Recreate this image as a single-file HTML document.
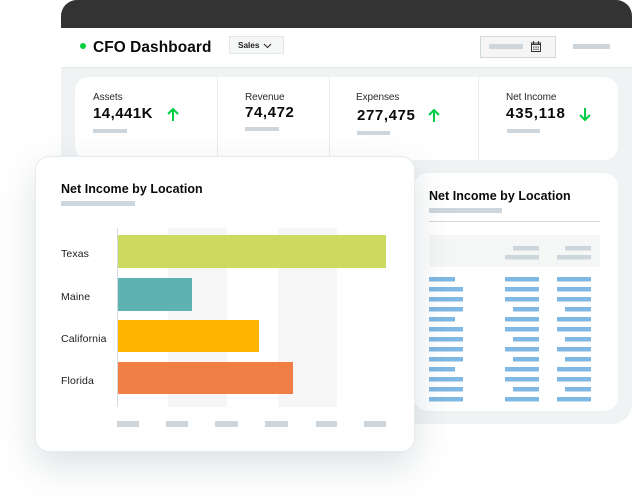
<!DOCTYPE html>
<html><head><meta charset="utf-8">
<style>
html,body{margin:0;padding:0;background:#fff}
#p{position:relative;width:632px;height:503px;overflow:hidden;background:#fff;font-family:"Liberation Sans",sans-serif;color:#111}
#p div{position:absolute}
.t{white-space:nowrap;line-height:1}
.l{font-size:10px;color:#2a2a2a;letter-spacing:-.08px}
.v{font-size:15px;font-weight:700;color:#0a0a0a;letter-spacing:.6px}
.g{background:#cdd6dc}
.h{font-size:12.5px;font-weight:700;color:#0a0a0a;letter-spacing:.03px}
.c{font-size:10.5px;color:#1c1c1c;letter-spacing:.12px}
svg{position:absolute;overflow:visible}
</style></head><body>
<div id="p">
<div style="left:61px;top:0;width:571px;height:424px;background:#f0f3f4;border-radius:16px 16px 20px 0"></div>
<div style="left:61px;top:0;width:571px;height:28px;background:#333;border-radius:16px 16px 0 0"></div>
<div style="left:61px;top:28px;width:571px;height:39px;background:#fff;border-bottom:1px solid #e4e9eb"></div>
<div style="left:80px;top:43px;width:6px;height:6px;border-radius:50%;background:#00cf3f"></div>
<div class="t" style="left:93px;top:40px;font-size:15.4px;font-weight:700;color:#0a0a0a;letter-spacing:.1px">CFO Dashboard</div>
<div style="left:229px;top:36px;width:53px;height:16px;background:#f5f6f6;border:1px solid #e1e6e8"></div>
<div class="t" style="left:238px;top:40.5px;font-size:8.3px;font-weight:700;color:#222;letter-spacing:-.05px">Sales</div>
<svg style="left:263px;top:43px" width="9" height="6" viewBox="0 0 9 6"><path d="M1 1l3.5 3.5L8 1" fill="none" stroke="#222" stroke-width="1"/></svg>
<div style="left:480px;top:36px;width:74px;height:20px;background:#f5f5f5;border:1px solid #cfd9de"></div>
<div class="g" style="left:489px;top:44px;width:34px;height:5px"></div>
<svg style="left:531px;top:41px" width="10" height="11" viewBox="0 0 10 11"><path d="M.5 2h9v8.500h-9zM2.500 0v3M7.500 0v3" fill="none" stroke="#333" stroke-width="1"/><path d="M1 3h8v1H1zM2 5.500h1.500v1H2zM4.300 5.500h1.500v1H4.300zM6.500 5.500H8v1H6.500zM2 7.800h1.500v1H2zM4.300 7.800h1.500v1H4.300zM6.500 7.800H8v1H6.500z" fill="#333"/></svg>
<div class="g" style="left:573px;top:44px;width:37px;height:5px"></div>

<div style="left:75px;top:77px;width:543px;height:83px;background:#fff;border-radius:14px"></div>
<div style="left:217px;top:77px;width:1px;height:83px;background:#e8ecee"></div>
<div style="left:329px;top:77px;width:1px;height:83px;background:#e8ecee"></div>
<div style="left:478px;top:77px;width:1px;height:83px;background:#e8ecee"></div>

<div class="t l" style="left:93px;top:92.500px">Assets</div>
<div class="t v" style="left:93px;top:106px;letter-spacing:.45px">14,441K</div>
<div class="g" style="left:93px;top:129px;width:34px;height:4px"></div>
<svg style="left:166px;top:107px" width="14" height="15" viewBox="0 0 14 15"><path d="M7 14V2M2 7l5-5 5 5" fill="none" stroke="#00cf45" stroke-width="2"/></svg>

<div class="t l" style="left:245px;top:92.500px">Revenue</div>
<div class="t v" style="left:245px;top:105px">74,472</div>
<div class="g" style="left:245px;top:127px;width:34px;height:4px"></div>

<div class="t l" style="left:356px;top:92.500px">Expenses</div>
<div class="t v" style="left:357px;top:108px">277,475</div>
<div class="g" style="left:357px;top:131px;width:33px;height:4px"></div>
<svg style="left:427px;top:108px" width="14" height="15" viewBox="0 0 14 15"><path d="M7 14V2M2 7l5-5 5 5" fill="none" stroke="#00cf45" stroke-width="2"/></svg>

<div class="t l" style="left:506px;top:92.500px">Net Income</div>
<div class="t v" style="left:506px;top:106px;letter-spacing:.9px">435,118</div>
<div class="g" style="left:507px;top:129px;width:33px;height:4px"></div>
<svg style="left:578px;top:107px" width="14" height="15" viewBox="0 0 14 15"><path d="M7 1v12M2 8l5 5 5-5" fill="none" stroke="#00cf45" stroke-width="2"/></svg>

<div style="left:414px;top:173px;width:204px;height:238px;background:#fff;border-radius:14px"></div>
<div class="t h" style="left:429px;top:189.500px">Net Income by Location</div>
<div class="g" style="left:429px;top:208px;width:73px;height:5px"></div>
<div style="left:429px;top:221px;width:171px;height:1px;background:#d2d6d8"></div>
<div style="left:429px;top:235px;width:171px;height:32px;background:#f5f6f6"></div>
<svg style="left:0;top:0" width="632" height="503" viewBox="0 0 632 503">
<g fill="#cdd6dc"><rect x="513" y="246" width="26" height="4.500"/><rect x="505" y="255" width="34" height="4.500"/><rect x="565" y="246" width="26" height="4.500"/><rect x="557" y="255" width="34" height="4.500"/></g>
<g fill="#7fb8e2">
<rect x="429" y="277" width="26" height="4.500"/><rect x="429" y="287" width="34" height="4.500"/><rect x="429" y="297" width="34" height="4.500"/><rect x="429" y="307" width="34" height="4.500"/><rect x="429" y="317" width="26" height="4.500"/><rect x="429" y="327" width="34" height="4.500"/><rect x="429" y="337" width="34" height="4.500"/><rect x="429" y="347" width="34" height="4.500"/><rect x="429" y="357" width="34" height="4.500"/><rect x="429" y="367" width="26" height="4.500"/><rect x="429" y="377" width="34" height="4.500"/><rect x="429" y="387" width="34" height="4.500"/><rect x="429" y="397" width="34" height="4.500"/>
<rect x="505" y="277" width="34" height="4.500"/><rect x="505" y="287" width="34" height="4.500"/><rect x="505" y="297" width="34" height="4.500"/><rect x="513" y="307" width="26" height="4.500"/><rect x="505" y="317" width="34" height="4.500"/><rect x="505" y="327" width="34" height="4.500"/><rect x="513" y="337" width="26" height="4.500"/><rect x="505" y="347" width="34" height="4.500"/><rect x="513" y="357" width="26" height="4.500"/><rect x="505" y="367" width="34" height="4.500"/><rect x="505" y="377" width="34" height="4.500"/><rect x="513" y="387" width="26" height="4.500"/><rect x="505" y="397" width="34" height="4.500"/>
<rect x="557" y="277" width="34" height="4.500"/><rect x="557" y="287" width="34" height="4.500"/><rect x="557" y="297" width="34" height="4.500"/><rect x="565" y="307" width="26" height="4.500"/><rect x="557" y="317" width="34" height="4.500"/><rect x="557" y="327" width="34" height="4.500"/><rect x="565" y="337" width="26" height="4.500"/><rect x="557" y="347" width="34" height="4.500"/><rect x="565" y="357" width="26" height="4.500"/><rect x="557" y="367" width="34" height="4.500"/><rect x="557" y="377" width="34" height="4.500"/><rect x="565" y="387" width="26" height="4.500"/><rect x="557" y="397" width="34" height="4.500"/>
</g></svg>

<div style="left:35px;top:156px;width:378px;height:294px;background:#fff;border:1px solid #e6ebed;border-radius:14px;box-shadow:0 14px 36px rgba(50,75,95,.17)"></div>
<div class="t h" style="left:61px;top:182.500px">Net Income by Location</div>
<div class="g" style="left:61px;top:201px;width:74px;height:5px"></div>
<div style="left:168px;top:228px;width:59px;height:179px;background:#f6f6f7"></div>
<div style="left:278px;top:228px;width:59px;height:179px;background:#f6f6f7"></div>
<div style="left:117px;top:228px;width:1px;height:179px;background:#d4dce1"></div>
<div style="left:118px;top:235px;width:268px;height:33px;background:#ccdb5f"></div>
<div style="left:118px;top:278px;width:74px;height:33px;background:#5fb2b2"></div>
<div style="left:118px;top:320px;width:141px;height:32px;background:#ffb500"></div>
<div style="left:118px;top:362px;width:175px;height:32px;background:#f07e45"></div>
<div class="t c" style="left:61px;top:248.500px">Texas</div>
<div class="t c" style="left:61px;top:291.500px">Maine</div>
<div class="t c" style="left:61px;top:333.500px">California</div>
<div class="t c" style="left:61px;top:375.500px">Florida</div>
<div class="g" style="left:117px;top:421px;width:22px;height:5.500px"></div>
<div class="g" style="left:166px;top:421px;width:22px;height:5.500px"></div>
<div class="g" style="left:215px;top:421px;width:23px;height:5.500px"></div>
<div class="g" style="left:265px;top:421px;width:23px;height:5.500px"></div>
<div class="g" style="left:316px;top:421px;width:21px;height:5.500px"></div>
<div class="g" style="left:364px;top:421px;width:22px;height:5.500px"></div>
</div>
</body></html>
